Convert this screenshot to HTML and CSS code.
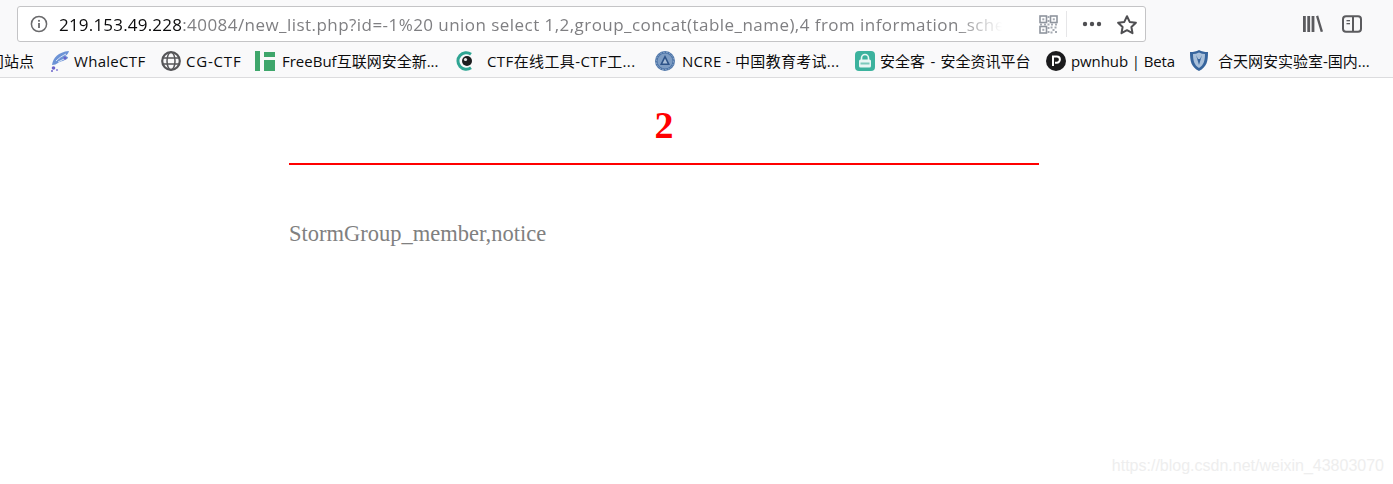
FILE: index.html
```html
<!DOCTYPE html>
<html lang="en">
<head>
  <meta charset="UTF-8">
  <title>new_list.php</title>
  <link rel="stylesheet" href="styles.css">
</head>
<body>

  <div class="toolbar">
    <div class="urlbar">
      <svg class="info-icon" width="18" height="18" viewBox="0 0 18 18">
        <circle cx="9" cy="9" r="7.6" fill="none" stroke="#6a6a6c" stroke-width="1.5"/>
        <rect x="8.1" y="8" width="1.8" height="5" fill="#6a6a6c"/>
        <rect x="8.1" y="4.9" width="1.8" height="1.8" fill="#6a6a6c"/>
      </svg>
      <div class="url"><span class="host">219.153.49.228</span>:40084/new_list.php?id=-1%20 union select 1,2,group_concat(table_name),4 from information_schema.tables where table_schema=database()</div>
      <svg class="qr-icon" width="19" height="19" viewBox="0 0 19 19">
        <g fill="none" stroke="#8f959e" stroke-width="1.6">
          <rect x="1" y="1" width="6.5" height="6.5"/>
          <rect x="11.5" y="1" width="6.5" height="6.5"/>
          <rect x="1" y="11.5" width="6.5" height="6.5"/>
        </g>
        <g fill="#a5aab2">
          <rect x="3.3" y="3.3" width="2" height="2"/>
          <rect x="13.8" y="3.3" width="2" height="2"/>
          <rect x="3.3" y="13.8" width="2" height="2"/>
          <rect x="8.5" y="1" width="2" height="2"/>
          <rect x="8.5" y="5" width="2" height="2"/>
          <rect x="1" y="8.5" width="2" height="2"/>
          <rect x="5" y="8.5" width="2" height="2"/>
          <rect x="8.5" y="8.5" width="2" height="2"/>
          <rect x="12" y="8.5" width="2" height="2"/>
          <rect x="16" y="8.5" width="2" height="2"/>
          <rect x="8.5" y="12" width="2" height="2"/>
          <rect x="11.5" y="11.5" width="2" height="2"/>
          <rect x="15.5" y="11.5" width="2" height="2"/>
          <rect x="8.5" y="16" width="2" height="2"/>
          <rect x="13.5" y="14" width="2" height="2"/>
          <rect x="11.5" y="16.5" width="2" height="2"/>
          <rect x="16" y="16" width="2" height="2"/>
        </g>
      </svg>
      <span class="urlbar-sep"></span>
      <svg class="dots-icon" width="20" height="6" viewBox="0 0 20 6">
        <circle cx="3" cy="3" r="2.2" fill="#4f4f52"/>
        <circle cx="10" cy="3" r="2.2" fill="#4f4f52"/>
        <circle cx="17" cy="3" r="2.2" fill="#4f4f52"/>
      </svg>
      <svg class="star-icon" width="22" height="21" viewBox="0 0 22 21">
        <path d="M11 2.200l2.700 5.700 6.200.8-4.500 4.300 1.100 6.200L11 16.200l-5.500 3 1.100-6.200L2.100 8.700l6.200-.8z" fill="none" stroke="#4f4f52" stroke-width="2" stroke-linejoin="round"/>
      </svg>
    </div>
    <svg class="library-icon" width="20" height="18" viewBox="0 0 20 18">
      <g fill="#5b5b5e">
        <rect x="0" y="1" width="2.800" height="16"/>
        <rect x="4.300" y="1" width="2.800" height="16"/>
        <rect x="8.600" y="1" width="2.800" height="16"/>
        <path d="M13 1.300l2.200-.7 4.800 15.800-2.300.7z"/>
      </g>
    </svg>
    <svg class="sidebar-icon" width="20" height="18" viewBox="0 0 20 18">
      <rect x="1" y="1.200" width="18" height="15.600" rx="3" fill="none" stroke="#5b5b5e" stroke-width="2"/>
      <rect x="10" y="1.200" width="2" height="15.600" fill="#5b5b5e"/>
      <rect x="4.500" y="5" width="3.500" height="1.300" fill="#5b5b5e"/>
      <rect x="4.500" y="8" width="3.500" height="1.300" fill="#5b5b5e"/>
    </svg>
  </div>

  <div class="bookmarks">
    <div class="bookmark bm-first"><span class="bm-title">访问站点</span></div>

    <div class="bookmark bm-whale">
      <svg width="20" height="22" viewBox="0 0 20 22">
        <path d="M2 15C3 8 8 2 19 1c-1 3-2 4-4 5 2 0 3 1 3 2-3 3-7 3-10 5-2 1-3 2-6 2z" fill="#6d93d6"/>
        <path d="M6 11c3-3 6-5 10-7M8 12c3-1 5-3 8-4" stroke="#dbe6f7" stroke-width="1" fill="none"/>
        <circle cx="15" cy="8" r="1.500" fill="#6b63c9"/>
        <circle cx="3.500" cy="18" r="1.800" fill="#6b63c9"/>
        <circle cx="7" cy="20" r="1.100" fill="#8f88dd"/>
        <circle cx="2" cy="21" r="1" fill="#6b63c9"/>
      </svg>
      <span class="bm-title">WhaleCTF</span>
    </div>

    <div class="bookmark bm-cg">
      <svg width="20" height="20" viewBox="0 0 20 20">
        <g fill="none" stroke="#555558" stroke-width="1.500">
          <circle cx="10" cy="10" r="8.800" stroke-width="2.200"/>
          <ellipse cx="10" cy="10" rx="4" ry="8.800"/>
          <path d="M1.500 7h17M1.500 13h17"/>
        </g>
      </svg>
      <span class="bm-title">CG-CTF</span>
    </div>

    <div class="bookmark bm-freebuf">
      <svg width="20" height="20" viewBox="0 0 20 20">
        <rect x="0" y="0" width="5" height="20" fill="#3ea66b"/>
        <rect x="9" y="1" width="11" height="5" fill="#3ea66b"/>
        <rect x="9" y="9" width="11" height="11" fill="#3ea66b"/>
      </svg>
      <span class="bm-title">FreeBuf互联网安全新...</span>
    </div>

    <div class="bookmark bm-tools">
      <svg width="18" height="20" viewBox="0 0 18 20">
        <path d="M15 3.200A8.300 8.300 0 1 0 15 16.800" fill="none" stroke="#2fa593" stroke-width="3"/>
        <circle cx="11" cy="10" r="5" fill="#1d1d1f"/>
        <circle cx="9.500" cy="8.500" r="1.600" fill="#e8e8e8"/>
      </svg>
      <span class="bm-title">CTF在线工具-CTF工...</span>
    </div>

    <div class="bookmark bm-ncre">
      <svg width="20" height="20" viewBox="0 0 20 20">
        <circle cx="10" cy="10" r="10" fill="#4c74a8"/>
        <circle cx="10" cy="10" r="7.500" fill="#7d9cc3"/>
        <circle cx="10" cy="10" r="8.700" fill="none" stroke="#a9bfd9" stroke-width=".8" stroke-dasharray="1.500 1.500"/>
        <path d="M10 4l5 10H5z" fill="#2c5288"/>
        <path d="M10 7.500l2.500 5h-5z" fill="#a9bfd9"/>
      </svg>
      <span class="bm-title">NCRE - 中国教育考试...</span>
    </div>

    <div class="bookmark bm-anquanke">
      <svg width="20" height="20" viewBox="0 0 20 20">
        <rect width="20" height="20" rx="4" fill="#3cb39e"/>
        <path d="M6.500 9V7a3.500 3.500 0 0 1 7 0v2" fill="none" stroke="#e9f7f4" stroke-width="1.600"/>
        <rect x="4" y="8.500" width="12" height="8" rx="1.500" fill="#e9f7f4"/>
        <rect x="5.500" y="11.500" width="9" height="2" fill="#7ccabb"/>
      </svg>
      <span class="bm-title">安全客 - 安全资讯平台</span>
    </div>

    <div class="bookmark bm-pwnhub">
      <svg width="20" height="20" viewBox="0 0 20 20">
        <circle cx="10" cy="10" r="10" fill="#1b1b1d"/>
        <path d="M7 15V5.500h3.800a3 3 0 0 1 0 6.200H9" fill="none" stroke="#fff" stroke-width="2"/>
      </svg>
      <span class="bm-title">pwnhub | Beta</span>
    </div>

    <div class="bookmark bm-shield">
      <svg width="18" height="21" viewBox="0 0 18 21">
        <path d="M9 0c3 1.500 5 2 9 2 0 9-1 15-9 19C1 17 0 11 0 2c4 0 6-.5 9-2z" fill="#37659d"/>
        <path d="M3 4c2 0 4-.5 6-1.500 2 1 4 1.500 6 1.500 0 6-1 11-6 14C4 15 3 10 3 4z" fill="#a9c0da"/>
        <path d="M6 5l3 10 3-10-2 4H8z" fill="#37659d"/>
      </svg>
      <span class="bm-title">合天网安实验室-国内...</span>
    </div>
  </div>

  <div class="content">
    <h1 class="news-title">2</h1>
    <p class="news-body">StormGroup_member,notice</p>
  </div>

  <div class="watermark">https://blog.csdn.net/weixin_43803070</div>

</body>
</html>
```

FILE: styles.css
```css
html, body {
  height: 100%;
}

body {
  margin: 0;
  background-color: #fff;
  position: relative;
  overflow: hidden;
  font-family: "Open Sans", "Noto Sans CJK SC", sans-serif;
}

.toolbar {
  display: flex;
  align-items: center;
  height: 44px;
  box-sizing: border-box;
  padding: 6px 0 2px 17px;
  background-color: #f9f9fa;
}

.urlbar {
  display: flex;
  align-items: center;
  width: 1129px;
  height: 36px;
  box-sizing: border-box;
  padding-left: 12px;
  background-color: #fff;
  border: 1px solid #c4c4c6;
  border-radius: 3px;
}

.info-icon {
  flex: none;
}

.url {
  width: 943px;
  margin-left: 11px;
  flex: none;
  overflow: hidden;
  white-space: nowrap;
  font-size: 17px;
  letter-spacing: 0.45px;
  color: #7f7f82;
  -webkit-mask-image: linear-gradient(to right, #000 95%, transparent 100%);
  mask-image: linear-gradient(to right, #000 95%, transparent 100%);
}

.host {
  letter-spacing: 0.2px;
  color: #0c0c0d;
}

.qr-icon {
  flex: none;
  margin-left: 37px;
}

.urlbar-sep {
  flex: none;
  width: 1px;
  height: 26px;
  margin-left: 8px;
  background-color: #e6e6e8;
}

.dots-icon {
  flex: none;
  margin-left: 15px;
}

.star-icon {
  flex: none;
  margin-left: 14px;
}

.library-icon {
  flex: none;
  margin-left: 157px;
}

.sidebar-icon {
  flex: none;
  margin-left: 19px;
}

.bookmarks {
  display: flex;
  align-items: center;
  height: 34px;
  box-sizing: border-box;
  background-color: #f9f9fa;
  border-bottom: 1px solid #dcdcde;
  white-space: nowrap;
  overflow: hidden;
}

.bookmark {
  display: flex;
  align-items: center;
  flex: none;
}

.bookmark svg {
  flex: none;
}

.bm-title {
  font-size: 15px;
  color: #0c0c0d;
}

.bm-first { width: 34px; justify-content: flex-end; overflow: hidden; }
.bm-whale { margin-left: 16px; width: 96px; }
.bm-cg { margin-left: 15px; width: 80px; }
.bm-freebuf { margin-left: 14px; width: 185px; }
.bm-tools { margin-left: 16px; width: 181px; }
.bm-ncre { margin-left: 18px; width: 185px; }
.bm-anquanke { margin-left: 15px; width: 176px; }
.bm-pwnhub { margin-left: 15px; width: 129px; }
.bm-shield { margin-left: 15px; }

.bm-whale .bm-title { margin-left: 4px; letter-spacing: 0.3px; }
.bm-cg .bm-title { margin-left: 5px; letter-spacing: 0.8px; }
.bm-freebuf .bm-title { margin-left: 7px; }
.bm-tools .bm-title { margin-left: 13px; letter-spacing: 0.4px; }
.bm-ncre .bm-title { margin-left: 7px; letter-spacing: 0.3px; }
.bm-anquanke .bm-title { margin-left: 5px; word-spacing: 1.5px; }
.bm-pwnhub .bm-title { margin-left: 5px; letter-spacing: -0.1px; }
.bm-shield .bm-title { margin-left: 10px; }

.content {
  width: 750px;
  margin-left: 289px;
  font-family: "Liberation Serif", serif;
}

.news-title {
  margin: 0;
  height: 87px;
  box-sizing: border-box;
  padding-top: 23px;
  border-bottom: 2px solid #f00;
  text-align: center;
  font-size: 38px;
  line-height: 48px;
  color: #f00;
}

.news-body {
  margin: 55px 0 0;
  font-size: 22.5px;
  line-height: 28px;
  color: #808080;
}

.watermark {
  position: absolute;
  right: 9px;
  bottom: 9px;
  font-family: "Liberation Sans", sans-serif;
  font-size: 16px;
  color: #eeeeee;
}
```
